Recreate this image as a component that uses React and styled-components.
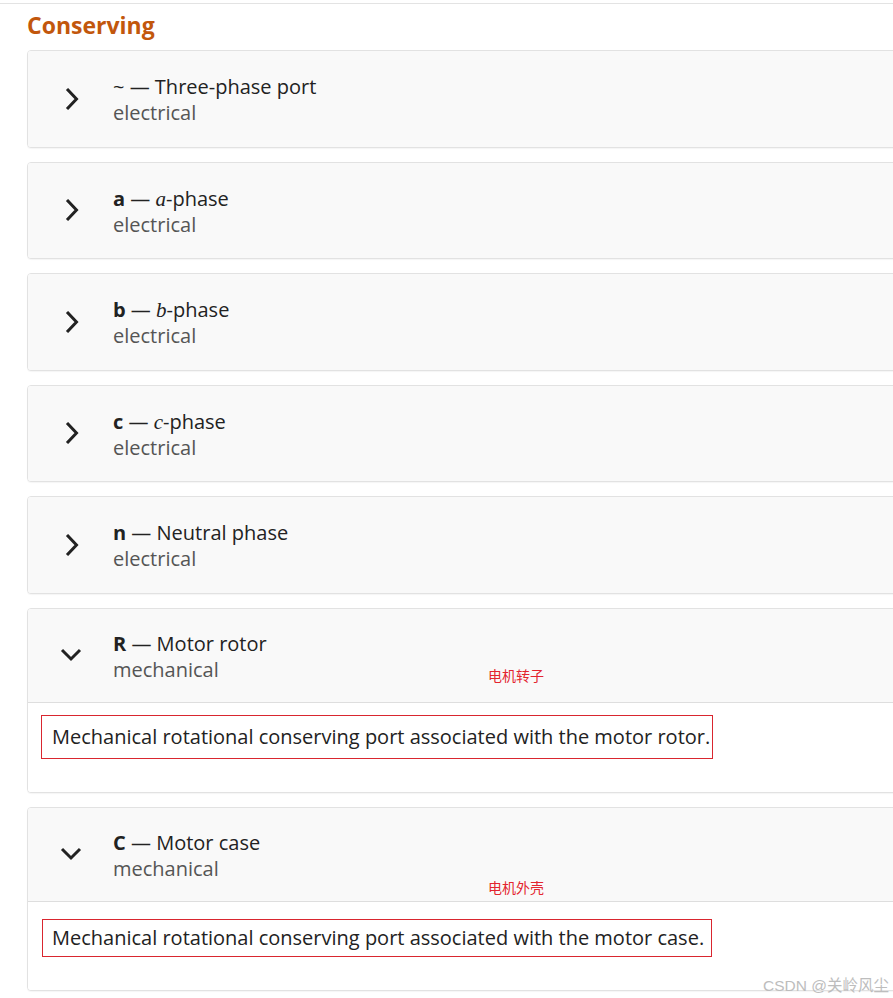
import React from 'react'
import styled, { createGlobalStyle } from 'styled-components'

const GlobalStyle = createGlobalStyle`
  html, body {
    margin: 0;
    padding: 0;
    background: #ffffff;
  }
  body {
    font-family: "Open Sans", "Noto Sans", "Noto Sans CJK SC", sans-serif;
    overflow-x: hidden;
  }
`

const Page = styled.div`
  margin-top: 3px;
  border-top: 1px solid #e3e3e3;
  padding: 0 0 0 27px;
  position: relative;
  min-height: 994px;
  box-sizing: border-box;
`

const Heading = styled.h2`
  margin: 6px 0 10px 0;
  font-size: 23px;
  line-height: 30px;
  font-weight: 700;
  color: #c2570c;
`

const List = styled.div`
  display: flex;
  flex-direction: column;
  gap: 14px;
  margin-right: -20px;
`

const Card = styled.div`
  border: 1px solid #e2e2e2;
  border-radius: 4px;
  background: #ffffff;
  box-shadow: 0 1px 1px rgba(0, 0, 0, 0.04);
  overflow: hidden;
`

const Header = styled.div`
  position: relative;
  display: flex;
  align-items: center;
  height: ${p => (p.$open ? '93px' : '95.5px')};
  background: #f9f9f9;
  border-bottom: ${p => (p.$open ? '1px solid #dedede' : 'none')};
`

const Chevron = styled.div`
  width: 85px;
  display: flex;
  padding-left: ${p => (p.$open ? '32px' : '37px')};
  box-sizing: border-box;
  color: #222;
`

const Info = styled.div`
  display: flex;
  flex-direction: column;
  margin-top: 3px;
`

const Title = styled.div`
  font-size: 20px;
  line-height: 26px;
  color: #222;
`

const Key = styled.b`
  font-weight: 700;
`

const MathVar = styled.i`
  font-family: "Liberation Serif", "DejaVu Serif", serif;
  font-size: 21px;
`

const Domain = styled.div`
  font-size: 20px;
  line-height: 26px;
  color: #555;
`

const Note = styled.span`
  position: absolute;
  left: 460px;
  bottom: ${p => p.$bottom};
  font-family: "Noto Sans CJK SC", sans-serif;
  font-size: 14px;
  color: #e3252f;
`

const Body = styled.div`
  padding: ${p => p.$pad};
  background: #fff;
`

const Desc = styled.div`
  display: inline-block;
  border: 1px solid #d9262f;
  padding: ${p => p.$boxPad};
  font-size: 20px;
  line-height: 24px;
  color: #222;
`

const Watermark = styled.div`
  position: absolute;
  right: 4px;
  top: 969px;
  font-family: "Liberation Sans", "Noto Sans CJK SC", sans-serif;
  font-size: 15.5px;
  color: #bdbdbd;
`

const Arrow = ({ open }) =>
  open ? (
    <svg width="22" height="14" viewBox="0 0 22 14">
      <polyline points="2,2 11,11 20,2" fill="none" stroke="currentColor" strokeWidth="3" />
    </svg>
  ) : (
    <svg width="14" height="22" viewBox="0 0 14 22">
      <polyline points="2,1 11.5,11 2,21" fill="none" stroke="currentColor" strokeWidth="3" />
    </svg>
  )

const ports = [
  { key: '~', title: 'Three-phase port', domain: 'electrical' },
  { key: 'a', math: 'a', title: '-phase', domain: 'electrical' },
  { key: 'b', math: 'b', title: '-phase', domain: 'electrical' },
  { key: 'c', math: 'c', title: '-phase', domain: 'electrical' },
  { key: 'n', title: 'Neutral phase', domain: 'electrical' },
  {
    key: 'R',
    title: 'Motor rotor',
    domain: 'mechanical',
    note: '电机转子',
    noteBottom: '17px',
    desc: 'Mechanical rotational conserving port associated with the motor rotor.',
    pad: '12px 13px 33px',
    boxPad: '9px 2px 9px 10px',
  },
  {
    key: 'C',
    title: 'Motor case',
    domain: 'mechanical',
    note: '电机外壳',
    noteBottom: '4px',
    desc: 'Mechanical rotational conserving port associated with the motor case.',
    pad: '17px 14px 33px',
    boxPad: '6px 7px 6px 9px',
  },
]

const App = () => {
  return (
    <Page>
      <GlobalStyle />
      <Heading>Conserving</Heading>
      <List>
        {ports.map(p => {
          const open = !!p.desc
          return (
            <Card key={p.key}>
              <Header $open={open}>
                <Chevron $open={open}>
                  <Arrow open={open} />
                </Chevron>
                <Info>
                  <Title>
                    {p.key === '~' ? '~' : <Key>{p.key}</Key>} —{' '}
                    {p.math && <MathVar>{p.math}</MathVar>}
                    {p.title}
                  </Title>
                  <Domain>{p.domain}</Domain>
                </Info>
                {p.note && <Note $bottom={p.noteBottom}>{p.note}</Note>}
              </Header>
              {open && (
                <Body $pad={p.pad}>
                  <Desc $boxPad={p.boxPad}>{p.desc}</Desc>
                </Body>
              )}
            </Card>
          )
        })}
      </List>
      <Watermark>CSDN @关岭风尘</Watermark>
    </Page>
  )
}

export default App
